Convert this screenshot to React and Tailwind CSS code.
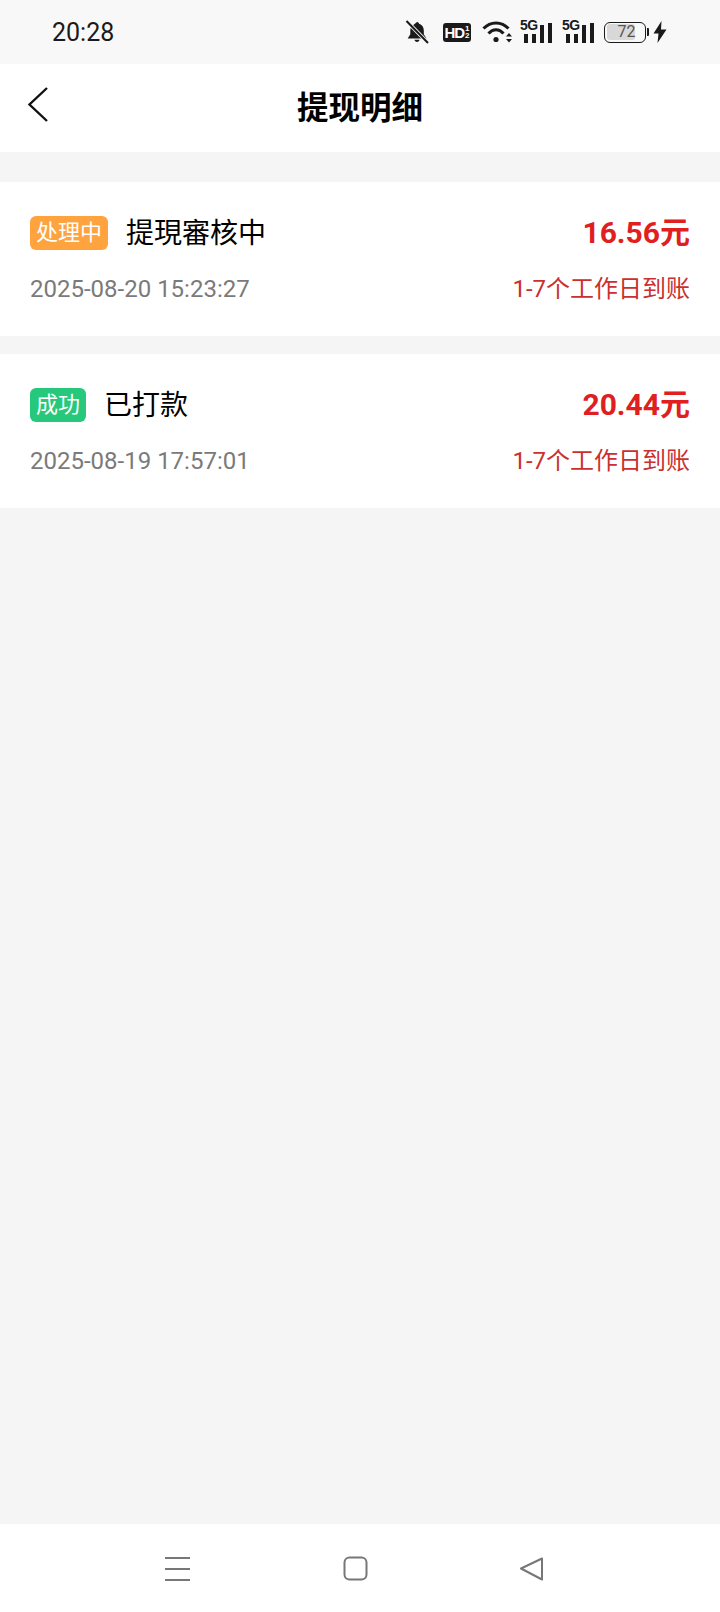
function Bell() {
  return (
    <svg width="24" height="24" viewBox="0 0 24 24" className="mr-[14px]">
      <path d="M12 2c1.2 0 1.9.8 2 1.8 3.2.9 4.8 3.4 4.8 6.8v3.6l2.7 4.3H2.7l2.6-4.3v-3.6c0-1.4.3-2.7.9-3.8z" fill="#1a1a1a" />
      <path d="M9.5 19.8h5c-.2 1.3-1.2 2.2-2.5 2.2s-2.3-.9-2.5-2.2z" fill="#1a1a1a" />
      <path d="M1.5 1 23 23" stroke="#f8f8f8" strokeWidth="3.8" />
      <path d="M1.5 1 23 23" stroke="#1a1a1a" strokeWidth="2" />
    </svg>
  );
}

function HD() {
  return (
    <div className="mr-[11px] flex h-[19px] w-[28px] items-center justify-center rounded-[3px] bg-[#1a1a1a] text-white">
      <span className="text-[15px] leading-none font-bold tracking-[-1px] [font-family:'Liberation_Sans',sans-serif]">HD</span>
      <span className="ml-[1px] flex flex-col items-center text-[8px] leading-[7px] font-bold [font-family:'Liberation_Sans',sans-serif]">
        <span>1</span>
        <span>2</span>
      </span>
    </div>
  );
}

function Wifi() {
  return (
    <svg width="30" height="24" viewBox="0 0 30 24" className="mr-[8px]">
      <path d="M1.5 8.5C8.5 1 19.5 1 26.5 8.5" fill="none" stroke="#1a1a1a" strokeWidth="3" />
      <path d="M6.5 13.5C11 8.5 17 8.5 21.5 13.5" fill="none" stroke="#1a1a1a" strokeWidth="3" />
      <circle cx="14" cy="19.5" r="2.6" fill="#1a1a1a" />
      <path d="M24 16.5h6L27 13zM24 19h6l-3 3.5z" fill="#1a1a1a" />
    </svg>
  );
}

function Signal() {
  const bars = [9, 9, 18, 20];
  return (
    <div className="relative mr-[10px] flex h-[24px] w-[32px] items-end justify-end gap-[4px] pb-[1px]">
      <span className="absolute top-[-2px] left-0 text-[14px] leading-[14px] font-bold tracking-[-0.6px] text-[#1a1a1a] [font-family:'Liberation_Sans',sans-serif]">5G</span>
      {bars.map((h, i) => (
        <span key={i} className="w-[4px] bg-[#1a1a1a]" style={{ height: h }} />
      ))}
    </div>
  );
}

function Battery() {
  return (
    <div className="flex items-center">
      <div className="flex h-[21px] w-[42px] items-center rounded-[6px] border-[1.5px] border-[#1a1a1a] p-[1.5px]">
        <div className="relative flex h-full w-[28px] items-center rounded-[3px] bg-[#d8d8d8]">
          <span className="absolute left-[11px] text-[16px] leading-none text-[#555555] [font-family:Roboto,sans-serif]">72</span>
        </div>
      </div>
      <span className="ml-[1px] h-[8px] w-[2px] rounded-r-[1px] bg-[#1a1a1a]" />
      <svg width="14" height="22" viewBox="0 0 14 22" className="ml-[4px]">
        <path d="M8.5 0 .5 12.5h5L4.5 22 13.5 8.5H8z" fill="#1a1a1a" />
      </svg>
    </div>
  );
}

function Row({ tag, tagClass, title, amount, date }) {
  return (
    <div className="flex h-[154px] flex-col bg-white px-[30px] pt-[34px]">
      <div className="flex h-[34px] items-center justify-between">
        <div className="flex items-center">
          <span className={`flex h-[34px] items-center justify-center rounded-[6px] text-[22px] leading-none text-white ${tagClass}`}>{tag}</span>
          <span className="ml-[18px] pt-[2px] text-[28px] leading-none text-black">{title}</span>
        </div>
        <span className="text-[30px] leading-none font-bold text-[#e02020]">{amount}</span>
      </div>
      <div className="mt-[23px] flex items-center justify-between text-[24px] leading-[32px]">
        <span className="text-[#7a7a7a]">{date}</span>
        <span className="text-[#c9302f]">1-7个工作日到账</span>
      </div>
    </div>
  );
}

export default function App() {
  return (
    <div className="flex h-[1612px] w-[720px] flex-col bg-[#f5f5f5] [font-family:Roboto,'Noto_Sans_CJK_SC',sans-serif]">
      <div className="flex h-[64px] items-center justify-between bg-[#f8f8f8] pr-[53px] pl-[52px]">
        <span className="text-[25px] leading-none text-[#1a1a1a]">20:28</span>
        <div className="flex items-center">
          <Bell />
          <HD />
          <Wifi />
          <Signal />
          <Signal />
          <Battery />
        </div>
      </div>
      <div className="relative flex h-[88px] items-center justify-center bg-white">
        <svg width="24" height="38" viewBox="0 0 24 38" className="absolute top-[22px] left-[26px]">
          <path d="M21 2 3.5 18.5 21 35" fill="none" stroke="#111111" strokeWidth="2.4" />
        </svg>
        <span className="pt-[2px] text-[31.5px] leading-none font-bold text-black">提现明细</span>
      </div>
      <div className="mt-[30px] flex flex-col gap-[18px]">
        <Row tag="处理中" tagClass="w-[78px] bg-[#ffa33f]" title="提現審核中" amount="16.56元" date="2025-08-20 15:23:27" />
        <Row tag="成功" tagClass="w-[56px] bg-[#26c97c]" title="已打款" amount="20.44元" date="2025-08-19 17:57:01" />
      </div>
      <div className="mt-auto flex h-[88px] items-start bg-white pt-[32px] pl-[165px]">
        <svg width="26" height="26" viewBox="0 0 26 26">
          <path d="M0 2h25M0 13h25M0 24h25" stroke="#777777" strokeWidth="2" />
        </svg>
        <svg width="26" height="26" viewBox="0 0 26 26" className="ml-[152px]">
          <rect x="1.5" y="1.5" width="22" height="22" rx="5" fill="none" stroke="#777777" strokeWidth="2" />
        </svg>
        <svg width="26" height="26" viewBox="0 0 26 26" className="ml-[150px]">
          <path d="M23 2.5 2 12.5 23 23.5Z" fill="none" stroke="#777777" strokeWidth="2" strokeLinejoin="round" />
        </svg>
      </div>
    </div>
  );
}
